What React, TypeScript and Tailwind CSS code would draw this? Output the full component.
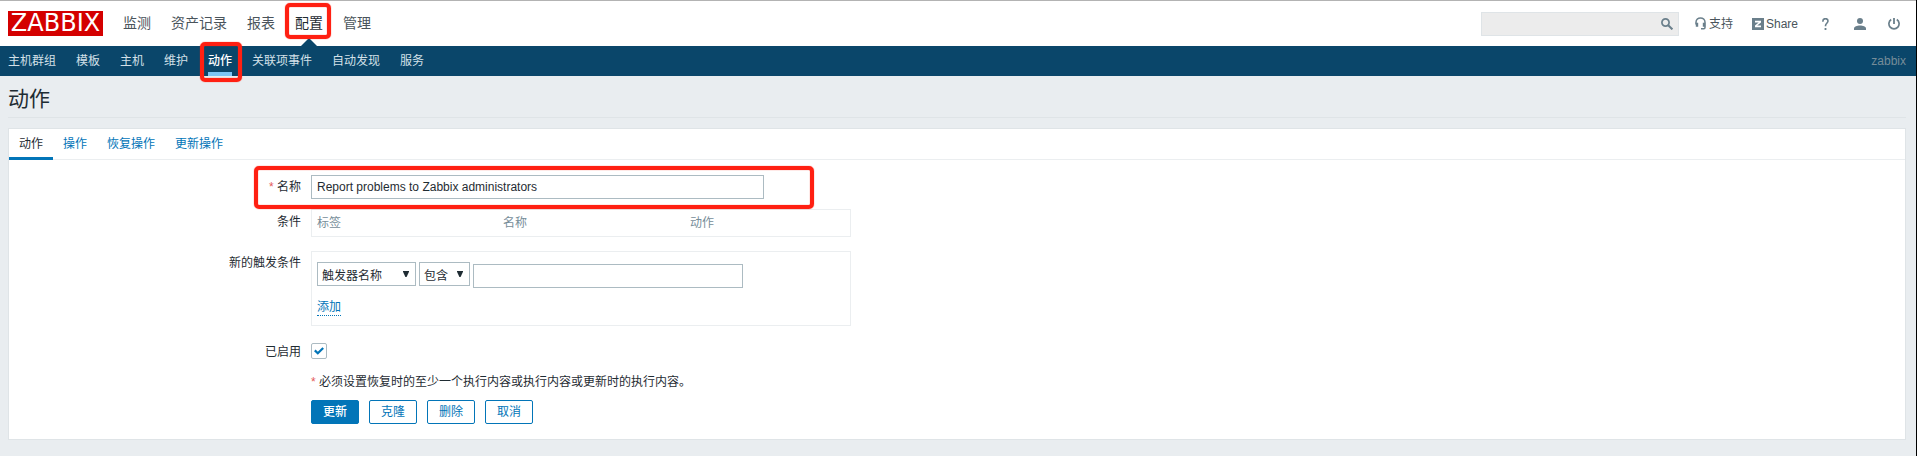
import React from "react";

const topMenu = ["监测", "资产记录", "报表", "配置", "管理"];
const subMenu = ["主机群组", "模板", "主机", "维护", "动作", "关联项事件", "自动发现", "服务"];
const tabs = ["动作", "操作", "恢复操作", "更新操作"];

function Highlight({ className }: { className: string }) {
  return (
    <span
      className={`pointer-events-none absolute z-10 rounded-[5px] border-4 border-[#ff2012] shadow-[0_0_1px_#ff2012,inset_0_0_1px_#ff2012] ${className}`}
    />
  );
}

function Label({ children, className = "" }: { children: React.ReactNode; className?: string }) {
  return (
    <div className={`w-[292px] shrink-0 text-right leading-6 ${className}`}>{children}</div>
  );
}

function Select({ text, className }: { text: string; className: string }) {
  return (
    <div
      className={`flex h-6 items-center justify-between border border-[#acbbc2] bg-white pl-1 pr-1.5 ${className}`}
    >
      <span className="pt-[3px]">{text}</span>
      <svg width="6" height="6" viewBox="0 0 6 6" className="-mt-px">
        <path d="M0 0h6v0.8L3.6 6H2.4L0 0.8z" fill="#1f2c33" />
      </svg>
    </div>
  );
}

function Header() {
  return (
    <header className="flex h-[46px] items-start border-t border-[#b3b3b3] bg-white pl-2 pr-4 text-[#4a545b]">
      <div className="mt-2.5 flex h-[25px] w-[95px] items-center justify-center bg-[#d40000] font-['DejaVu_Sans',sans-serif] text-[24px] leading-[25px] text-white">
        ZABBIX
      </div>
      <nav className="ml-5 flex h-[45px] items-center gap-5 text-[14px]">
        {topMenu.map((m) =>
          m === "配置" ? (
            <span key={m} className="relative flex h-full items-center text-[#1f2c33]">
              {m}
              <svg className="absolute bottom-0 left-1.5" width="16" height="8" viewBox="0 0 16 8">
                <path d="M0 8L8 0l8 8z" fill="#0a466a" />
              </svg>
              <Highlight className="-left-[10px] top-0.5 h-[36px] w-[46px]" />
            </span>
          ) : (
            <span key={m}>{m}</span>
          ),
        )}
      </nav>
      <div className="ml-auto flex h-[45px] items-center text-[#6a7f8b]">
        <div className="flex h-6 w-[198px] items-center justify-end border border-[#dfe4e7] bg-[#ececec] pr-[5px]">
          <svg width="12" height="12" viewBox="0 0 12 12" fill="none" stroke="currentColor">
            <circle cx="4.5" cy="4.5" r="3.6" strokeWidth="1.7" />
            <path d="M7.2 7.2l4.2 4.2" strokeWidth="2" />
          </svg>
        </div>
        <div className="ml-4 flex items-center">
          <svg width="11" height="13" viewBox="0 0 11 13" fill="none" stroke="currentColor">
            <path d="M1 7.5V5.2a4.5 4.3 0 0 1 9 0v5.3q0 1.2-1.2 1.2H6" strokeWidth="1.5" />
            <path d="M2 5.8v4M9 5.8v4" strokeWidth="2.4" />
          </svg>
          <span className="ml-[3px] text-[#4a545b]">支持</span>
        </div>
        <div className="ml-[19px] flex items-center">
          <svg width="12" height="12" viewBox="0 0 12 12">
            <path d="M0 0h12v12H0z" fill="currentColor" />
            <path d="M3 2.8h6v1.7L5.2 7.6H9v1.7H3V7.6l3.7-3.1H3z" fill="#fff" />
          </svg>
          <span className="ml-0.5 text-[#4a545b]">Share</span>
        </div>
        <svg className="ml-6" width="7" height="12" viewBox="0 0 7 12" fill="none" stroke="currentColor">
          <path d="M0.9 3.8V3a2.5 2.3 0 0 1 5.1 0c0 2-2.5 2.5-2.5 4.7v.5" strokeWidth="1.6" />
          <path d="M3.5 10v2" strokeWidth="1.8" />
        </svg>
        <svg className="ml-[25px]" width="12" height="12" viewBox="0 0 12 12" fill="currentColor">
          <circle cx="6" cy="3" r="3" />
          <path d="M0 12v-1.5C0 8.5 3 7.5 6 7.5s6 1 6 3V12z" />
        </svg>
        <svg className="ml-[22px]" width="12" height="12" viewBox="0 0 12 12" fill="none" stroke="currentColor">
          <path d="M3.2 1.5a5.1 5.1 0 1 0 5.6 0" strokeWidth="1.7" />
          <path d="M6 0v6" strokeWidth="1.8" />
        </svg>
      </div>
    </header>
  );
}

export default function App() {
  return (
    <div className="h-[456px] w-[1917px] overflow-hidden border-r border-black bg-[#e9edf0] font-['Liberation_Sans','Noto_Sans_CJK_SC',sans-serif] text-[12px] text-[#1f2c33]">
      <Header />
      <div className="flex h-[30px] items-center gap-5 bg-[#0a466a] pl-2 pr-2.5 text-[#d3e0e8]">
        {subMenu.map((m) =>
          m === "动作" ? (
            <span
              key={m}
              className="relative flex h-full items-center border-b-4 border-[#7dc5f5] pt-1 font-medium text-white"
            >
              {m}
              <Highlight className="-left-[8px] -top-1 h-[40px] w-[42px]" />
            </span>
          ) : (
            <span key={m}>{m}</span>
          ),
        )}
        <span className="ml-auto text-[#768d99]">zabbix</span>
      </div>

      <main className="pl-2 pr-2.5">
        <h1 className="h-[42px] border-b border-[#dfe4e7] text-[21px] leading-[45px]">动作</h1>
        <section className="mt-2.5 h-[312px] border border-[#dfe4e7] bg-white">
          <div className="flex h-[31px] border-b border-[#ebeef0]">
            {tabs.map((t, i) => (
              <span
                key={t}
                className={
                  i === 0
                    ? "h-[31px] border-b-[3px] border-[#0275b8] px-2.5 leading-[31px]"
                    : "px-2.5 leading-[31px] text-[#0275b8]"
                }
              >
                {t}
              </span>
            ))}
          </div>

          <div className="relative flex pt-[15px]">
            <Label>
              <span className="text-[#e45959]">*</span> 名称
            </Label>
            <div className="ml-2.5 h-6 w-[453px] border border-[#acbbc2] pl-[5px] leading-[22px]">
              Report problems to Zabbix administrators
            </div>
            <Highlight className="left-[245px] top-[6px] h-[43px] w-[560px]" />
          </div>

          <div className="mt-2.5 flex">
            <Label className="pt-px">条件</Label>
            <div className="ml-2.5 flex h-7 w-[540px] border border-[#ebeef0] pl-[5px] leading-[26px] text-[#768d99]">
              <span className="w-[186px]">标签</span>
              <span className="w-[187px]">名称</span>
              <span>动作</span>
            </div>
          </div>

          <div className="mt-3.5 flex">
            <Label>新的触发条件</Label>
            <div className="ml-2.5 h-[75px] w-[540px] border border-[#ebeef0] pl-[5px] pt-2.5">
              <div className="flex items-start">
                <Select text="触发器名称" className="w-[99px]" />
                <Select text="包含" className="ml-[3px] w-[51px]" />
                <div className="ml-[3px] mt-0.5 h-6 w-[270px] border border-[#acbbc2]" />
              </div>
              <a className="mt-[9px] inline-block h-[19px] border-b border-dotted border-[#0275b8] leading-[20px] text-[#0275b8]">
                添加
              </a>
            </div>
          </div>

          <div className="mt-[13px] flex h-6">
            <Label className="pt-px">已启用</Label>
            <div className="ml-2.5 mt-1 flex h-4 w-4 items-center justify-center rounded-[2px] border border-[#acbbc2]">
              <svg width="10" height="8" viewBox="0 0 10 8" fill="none" stroke="#0275b8" strokeWidth="2.2">
                <path d="M0.8 3.4L3.8 6.2L9.2 1" />
              </svg>
            </div>
          </div>

          <div className="ml-[302px] mt-[7px] leading-6">
            <span className="text-[#e45959]">*</span> 必须设置恢复时的至少一个执行内容或执行内容或更新时的执行内容。
          </div>
          <div className="ml-[302px] mt-1.5 flex gap-2.5 text-center leading-[23px] text-[#0275b8]">
            <button className="h-6 w-12 rounded-[2px] border border-[#0275b8] bg-[#0275b8] font-medium text-white">
              更新
            </button>
            <button className="h-6 w-12 rounded-[2px] border border-[#0275b8]">克隆</button>
            <button className="h-6 w-12 rounded-[2px] border border-[#0275b8]">删除</button>
            <button className="h-6 w-12 rounded-[2px] border border-[#0275b8]">取消</button>
          </div>
        </section>
      </main>
    </div>
  );
}
